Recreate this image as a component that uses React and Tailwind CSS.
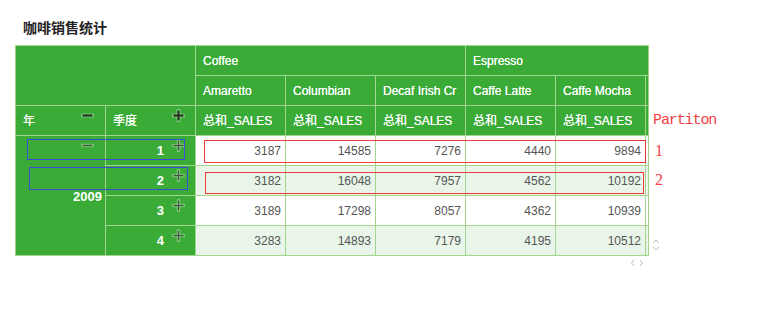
import React from "react";

const green = "bg-[#3aab37]";
const line = "border-[#a4d58c]";

const products = ["Amaretto", "Columbian", "Decaf Irish Cr", "Caffe Latte", "Caffe Mocha", ""];

const rows = [
  { q: 1, values: [3187, 14585, 7276, 4440, 9894, ""] },
  { q: 2, values: [3182, 16048, 7957, 4562, 10192, ""] },
  { q: 3, values: [3189, 17298, 8057, 4362, 10939, ""] },
  { q: 4, values: [3283, 14893, 7179, 4195, 10512, ""] },
];

function Icon({ plus, dark }) {
  const core = dark ? "#22331f" : "#3e5a3b";
  return (
    <svg width="13" height="13" viewBox="0 0 13 13" className="block">
      <path d="M1.5 6.5h10" stroke="rgba(255,255,255,0.35)" strokeWidth={dark ? 4 : 3.5} strokeLinecap="round" />
      {plus && <path d="M6.5 1.5v10" stroke="rgba(255,255,255,0.35)" strokeWidth={dark ? 4 : 3.5} strokeLinecap="round" />}
      <path d="M1.5 6.5h10" stroke={core} strokeWidth={dark ? 2.2 : 1.4} />
      {plus && <path d="M6.5 1.5v10" stroke={core} strokeWidth={dark ? 2.2 : 1.4} />}
    </svg>
  );
}

function Head({ children, className = "" }) {
  return (
    <div className={`${green} border-r border-b ${line} flex items-center px-[7px] text-white text-[12px] whitespace-nowrap overflow-hidden [text-shadow:0_0_0.5px_#fff] ${className}`}>
      {children}
    </div>
  );
}

export default function App() {
  return (
    <div className="relative w-[765px] h-[311px] bg-white font-['Liberation_Sans','Noto_Sans_CJK_SC',sans-serif]">
      <div className="pl-[23px] pt-[19px] text-[14px] leading-[18px] font-bold text-[#222]">咖啡销售统计</div>

      <div className="flex ml-[15px] mt-[8px]">
        <div>
          <div className={`w-[634px] border-l border-t border-r ${line} overflow-hidden`}>
            <div className="grid grid-cols-[repeat(8,90px)] grid-rows-[repeat(7,30px)]">
              <Head className="col-span-2 row-span-2" />
              <Head className="col-span-3">Coffee</Head>
              <Head className="col-span-3">Espresso</Head>
              {products.map((p, k) => (
                <Head key={k}>{p}</Head>
              ))}
              <Head className="relative">
                年
                <span className="absolute right-[11px] top-[3px]"><Icon dark /></span>
              </Head>
              <Head className="relative">
                季度
                <span className="absolute right-[10px] top-[3px]"><Icon plus dark /></span>
              </Head>
              {products.map((p, k) => (
                <Head key={k}>{p ? "总和_SALES" : ""}</Head>
              ))}

              <div className={`${green} row-span-4 border-r border-b ${line} relative flex items-center justify-end pr-[3px] text-white text-[13px] font-bold`}>
                <span className="absolute right-[11px] top-[3px]"><Icon /></span>
                <span className="mt-[2px]">2009</span>
              </div>
              {rows.map((r, i) => (
                <React.Fragment key={r.q}>
                  <div className={`${green} border-r border-b ${line} relative flex items-center justify-end pr-[31px] text-white text-[13px] font-bold`}>
                    {r.q}
                    <span className="absolute right-[10px] top-[3px]"><Icon plus /></span>
                  </div>
                  {r.values.map((v, j) => (
                    <div
                      key={j}
                      className={`${i % 2 ? "bg-[#e8f5e8]" : "bg-white"} border-r border-b ${line} flex items-center justify-end pr-[4px] text-[12px] text-[#555]`}
                    >
                      {v}
                    </div>
                  ))}
                </React.Fragment>
              ))}
            </div>
          </div>
          <div className="flex justify-end pr-[5px] pt-[3px]">
            <svg width="14" height="8" viewBox="0 0 14 8">
              <path d="M4 1L1.5 4 4 7M10 1l2.5 3L10 7" fill="none" stroke="#b8b8b8" strokeWidth="1" />
            </svg>
          </div>
        </div>

        <div className="flex flex-col pl-[4px]">
          <div className="pt-[67px] text-[15px] leading-[18px] tracking-[-1.1px] text-[#f04040] font-['Liberation_Mono',monospace]">Partiton</div>
          <div className="pt-[12px] pl-[2px] text-[16px] leading-[18px] text-[#f04040] font-['Liberation_Serif',serif]">1</div>
          <div className="pt-[11px] pl-[2px] text-[16px] leading-[18px] text-[#f04040] font-['Liberation_Serif',serif]">2</div>
          <svg className="mt-[48px] -ml-[2px]" width="10" height="16" viewBox="0 0 10 16">
            <path d="M2 6l3-3 3 3M2 10l3 3 3-3" fill="none" stroke="#b8b8b8" strokeWidth="1" />
          </svg>
        </div>
      </div>

      {/* annotation boxes drawn over the table */}
      <div className="absolute left-[27px] top-[139px] w-[158px] h-[21px] border border-[#3b4fd6]" />
      <div className="absolute left-[29px] top-[167px] w-[159px] h-[23px] border border-[#3b4fd6]" />
      <div className="absolute left-[204px] top-[140px] w-[442px] h-[23px] border border-[#f03a3a]" />
      <div className="absolute left-[205px] top-[172px] w-[439px] h-[22px] border border-[#f03a3a]" />
    </div>
  );
}
